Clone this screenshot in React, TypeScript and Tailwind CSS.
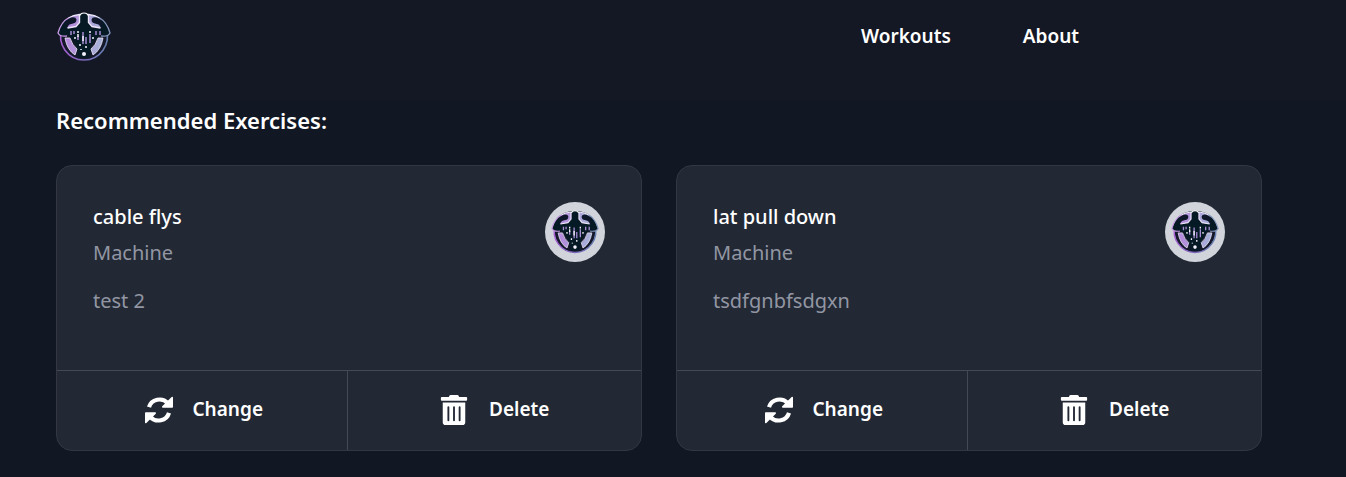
import { FaTrashAlt } from "react-icons/fa";

type Exercise = { name: string; kind: string; notes: string };

const exercises: Exercise[] = [
  { name: "cable flys", kind: "Machine", notes: "test 2" },
  { name: "lat pull down", kind: "Machine", notes: "tsdfgnbfsdgxn" },
];

function Arrow() {
  return (
    <>
      <path d="M4 11.200 A10.900 10.400 0 0 1 22.800 7.200" fill="none" stroke="currentColor" strokeWidth="4.200" />
      <path
        d="M27.200 1.500 V10.900 H17.800 Z"
        fill="currentColor"
        stroke="currentColor"
        strokeWidth="1.600"
        strokeLinejoin="round"
      />
    </>
  );
}

function ChangeIcon({ className }: { className: string }) {
  return (
    <svg viewBox="0 0 28 28" className={className} aria-hidden="true">
      <Arrow />
      <g transform="rotate(180 14 14)">
        <Arrow />
      </g>
    </svg>
  );
}

function Logo({ className }: { className: string }) {
  return (
    <svg viewBox="0 0 54 50" className={className} aria-hidden="true">
      <defs>
        <linearGradient id="rim" x1="0" y1="0" x2="1" y2="0">
          <stop offset="0" stopColor="#a55fd0" />
          <stop offset="0.5" stopColor="#7a68bd" />
          <stop offset="1" stopColor="#667fae" />
        </linearGradient>
        <linearGradient id="lat" gradientUnits="userSpaceOnUse" x1="8" y1="0" x2="46" y2="0">
          <stop offset="0" stopColor="#b587dc" />
          <stop offset="1" stopColor="#a6b4d8" />
        </linearGradient>
      </defs>
      <path d="M5 17 A23.300 23.300 0 1 0 49 17" fill="#14182a" stroke="url(#rim)" strokeWidth="1.600" />
      <path
        d="M12 5 Q4 10 1 22 Q4 25 11 23 L14 26 Q19 31 20 37 L22 46 H32 L34 37 Q35 31 40 26 L43 23 Q50 25 53 22 Q50 10 42 5 Q35 1 27 1 Q19 1 12 5Z"
        fill="#051a25"
      />
      <path
        d="M10 7 Q15 3 22.500 2.500 V10.500 L19 14.500 L10.500 16 L11 12Z M44 7 Q39 3 31.500 2.500 V10.500 L35 14.500 L43.500 16 L43 12Z"
        fill="url(#lat)"
      />
      <path
        d="M11.500 6 Q16 3 22.500 2.500 V10.500 L19 14.500 L10.500 16 M42.500 6 Q38 3 31.500 2.500 V10.500 L35 14.500 L43.500 16"
        fill="none"
        stroke="#ece4f8"
        strokeWidth="1.400"
      />
      <path
        d="M9 8 L14 5.500 Q19 4.500 19.500 7.500 Q19.500 11 16 11.500 L12.500 12.500 L9 16Z M45 8 L40 5.500 Q35 4.500 34.500 7.500 Q34.500 11 38 11.500 L41.500 12.500 L45 16Z"
        fill="#0d1729"
      />
      <path d="M23 3.500 Q23.500 1 27 1 Q30.500 1 31 3.500" fill="none" stroke="#fff" strokeWidth="1.200" />
      <path d="M12 5.500 Q4 10 1 21 Q3 25 10 24" fill="none" stroke="#c69be4" strokeWidth="1.300" />
      <path d="M42 5.500 Q50 10 53 21 Q51 25 44 24" fill="none" stroke="#8798bd" strokeWidth="1.300" />
      <path
        d="M8 26 L13 26 Q15 33 20 37 L18 43 Q10 38 8 26Z M46 26 L41 26 Q39 33 34 37 L36 43 Q44 38 46 26Z"
        fill="url(#lat)"
        stroke="#eee8fa"
        strokeWidth=".8"
      />
      <path d="M14 19v4 M17 19v3 M21 24v4 M26 20v12 M29 25v7 M33 22v9 M39 19v4 M43 19v4" stroke="#a78bd3" strokeWidth="1.500" />
      <path d="M21 19v2 M21 22v3 M26 24v5 M33 19v2 M36 25v2 M18 25v2 M23 32v2 M29 34v2 M24 37v1" stroke="#f5f1fc" strokeWidth="1.500" />
      <circle cx="27" cy="42" r="2" fill="#f5f1fc" />
    </svg>
  );
}

const action =
  "flex flex-1 cursor-pointer items-center justify-center gap-5 pb-0.5 text-[19px] font-semibold text-white";

function ExerciseCard({ name, kind, notes }: Exercise) {
  return (
    <li className="flex flex-col overflow-hidden rounded-2xl border border-[#333744] bg-[#222935]">
      <div className="flex min-h-51 items-start justify-between p-9">
        <div className="text-xl leading-[30px]">
          <h2 className="font-medium text-white">{name}</h2>
          <p className="mt-1.5 text-[#9296a3]">{kind}</p>
          <p className="mt-[18px] text-[#9296a3]">{notes}</p>
        </div>
        <div className="flex size-15 shrink-0 items-center justify-center rounded-full bg-[#d1d5db]">
          <Logo className="h-12 w-12" />
        </div>
      </div>
      <div className="flex h-20 border-t border-[#444956]">
        <button type="button" className={action}>
          <ChangeIcon className="size-7" />
          Change
        </button>
        <button type="button" className={`${action} -ml-1 border-l border-[#444956]`}>
          <FaTrashAlt className="size-[30px]" aria-hidden="true" />
          Delete
        </button>
      </div>
    </li>
  );
}

export default function App() {
  return (
    <div className="min-h-screen bg-[#111723] font-['Noto_Sans',sans-serif] text-white">
      <header className="flex h-25 items-start bg-[#141724] pt-3 pl-14">
        <a href="#home" aria-label="Home">
          <Logo className="h-[50px] w-14" />
        </a>
        <nav className="mr-[20.7%] ml-auto flex gap-18 pt-2 text-[19px] leading-8 font-semibold">
          <a href="#workouts">Workouts</a>
          <a href="#about">About</a>
        </nav>
      </header>
      <main className="pr-21 pb-6 pl-14">
        <h1 className="pt-1 text-[22px] leading-8 font-semibold">Recommended Exercises:</h1>
        <ul className="mt-[29px] grid grid-cols-2 gap-[34px]">
          {exercises.map((exercise) => (
            <ExerciseCard key={exercise.name} {...exercise} />
          ))}
        </ul>
      </main>
    </div>
  );
}
